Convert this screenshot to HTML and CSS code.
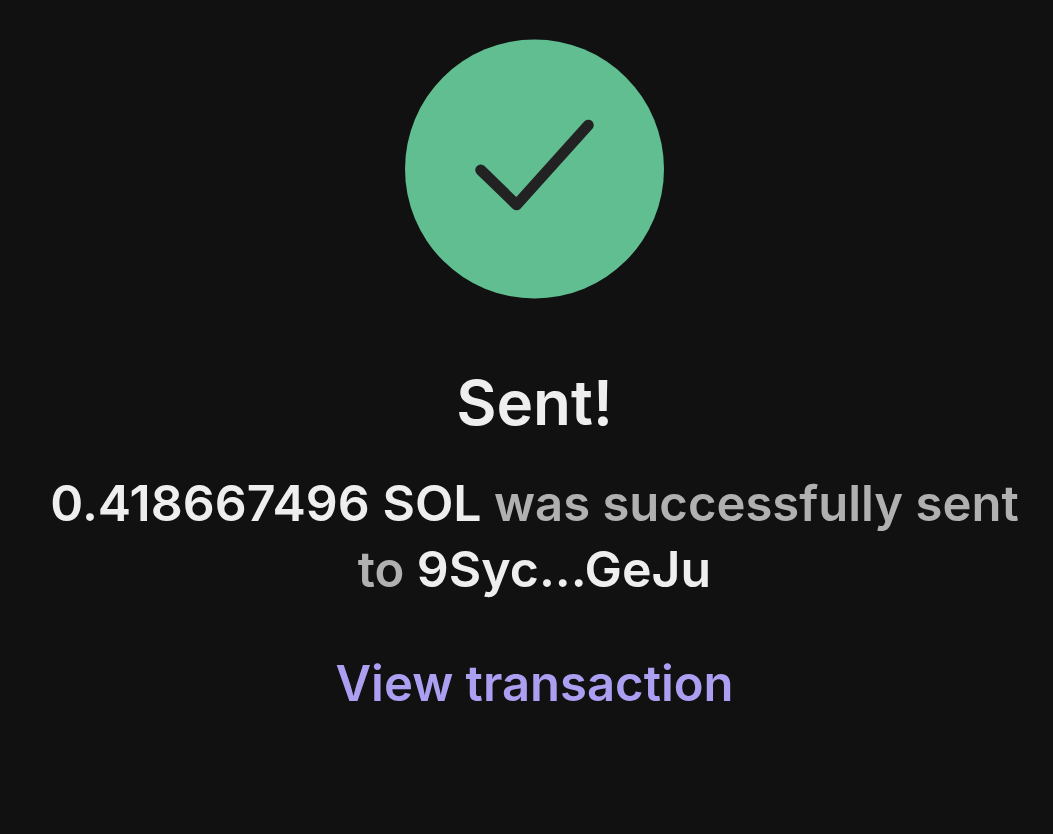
FILE: index.html
```html
<!DOCTYPE html>
<html lang="en">
<head>
    <meta charset="UTF-8">
    <meta name="viewport" content="width=device-width, initial-scale=1.0">
    <title>Transaction Sent</title>
    <link rel="stylesheet" href="styles.css">
</head>
<body>

    <main class="sent-container">
        <svg class="status-icon" viewBox="0 0 260 260" aria-hidden="true">
            <circle class="status-circle" cx="130" cy="130" r="130"/>
            <path class="status-check" d="M76 131L112 166L184 86"/>
        </svg>
        <h1>Sent!</h1>
        <p class="message"><strong>0.418667496 SOL</strong> was successfully sent to <strong>9Syc...GeJu</strong></p>
        <a class="view-link" href="#">View transaction</a>
    </main>

</body>
</html>
```

FILE: styles.css
```css
*, *::before, *::after {
    box-sizing: border-box;
    margin: 0;
    padding: 0;
}

body {
    min-height: 100vh;
    font-family: Inter, Roboto, "Liberation Sans", sans-serif;
    font-weight: 600;
    background-color: #111111;
    color: #eeeeee;
}

.sent-container {
    display: flex;
    flex-direction: column;
    align-items: center;
    padding: 39px 16px 48px 32px;
    text-align: center;
}

.status-icon {
    width: 259px;
    height: 260px;
}

.status-circle {
    fill: #60be91;
}

.status-check {
    fill: none;
    stroke: #222222;
    stroke-width: 11;
    stroke-linecap: round;
    stroke-linejoin: round;
}

h1 {
    margin-top: 64px;
    font-size: 62px;
    font-weight: 600;
    line-height: 80px;
}

.message {
    margin-top: 28px;
    font-size: 49px;
    line-height: 66px;
    color: #b0b0b0;
}

.message strong {
    font-size: 50px;
    font-weight: 600;
    line-height: 1;
    color: #eeeeee;
}

.view-link {
    margin-top: 48px;
    font-size: 49px;
    line-height: 66px;
    color: #ab9ff2;
    text-decoration: none;
}
```
